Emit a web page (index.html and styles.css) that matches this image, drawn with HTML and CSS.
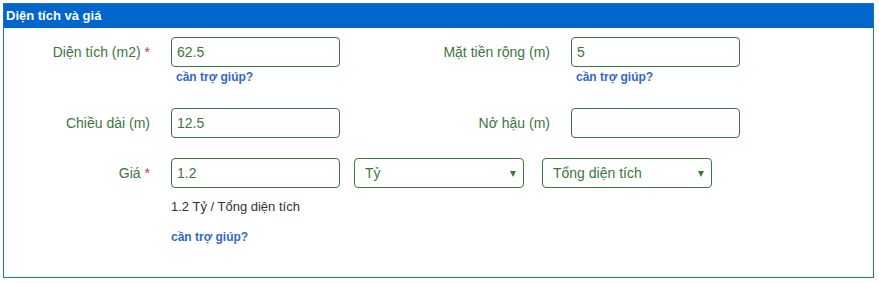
FILE: index.html
```html
<!DOCTYPE html>
<html lang="vi">
<head>
<meta charset="utf-8">
<title>Diện tích và giá</title>
<link rel="stylesheet" href="styles.css">
</head>
<body>
<div class="panel">
  <div class="panel-head">Diện tích và giá</div>
  <div class="panel-body">
    <div class="row row-first">
      <div class="field">
        <label class="label">Diện tích (m2) <span class="req">*</span></label>
        <div class="control">
          <input class="input" type="text" value="62.5">
          <a class="help help-indent">cần trợ giúp?</a>
        </div>
      </div>
      <div class="field">
        <label class="label">Mặt tiền rộng (m)</label>
        <div class="control">
          <input class="input" type="text" value="5">
          <a class="help help-indent">cần trợ giúp?</a>
        </div>
      </div>
    </div>
    <div class="row row-second">
      <div class="field">
        <label class="label">Chiều dài (m)</label>
        <div class="control">
          <input class="input" type="text" value="12.5">
        </div>
      </div>
      <div class="field">
        <label class="label">Nở hậu (m)</label>
        <div class="control">
          <input class="input" type="text" value="">
        </div>
      </div>
    </div>
    <div class="row row-third">
      <div class="field field-wide">
        <label class="label">Giá <span class="req">*</span></label>
        <div class="control">
          <div class="price-line">
            <input class="input" type="text" value="1.2">
            <div class="select-wrap select-unit">
              <select class="select"><option>Tỷ</option></select>
            </div>
            <div class="select-wrap select-area">
              <select class="select"><option>Tổng diện tích</option></select>
            </div>
          </div>
          <div class="summary">1.2 Tỷ / Tổng diện tích</div>
          <a class="help help-last">cần trợ giúp?</a>
        </div>
      </div>
    </div>
  </div>
</div>
</body>
</html>
```

FILE: styles.css
```css
* {
  box-sizing: border-box;
}

body {
  margin: 0;
  background: #ffffff;
  font-family: "Liberation Sans", Arial, Helvetica, sans-serif;
}

.panel {
  margin: 3px 0 0 3px;
  width: 871px;
  border: 1px solid #1a6fd0;
}

.panel-head {
  height: 24px;
  line-height: 24px;
  background: #0066cc;
  color: #ffffff;
  font-weight: bold;
  font-size: 13px;
  padding-left: 2px;
}

.panel-body {
  padding: 9px 0 31px 0;
}

.row {
  display: flex;
}

.row-second {
  margin-top: 22px;
}

.row-third {
  margin-top: 20px;
}

.field {
  width: 400px;
  display: flex;
  align-items: flex-start;
}

.field-wide {
  width: auto;
}

.label {
  width: 146px;
  margin-right: 21px;
  text-align: right;
  font-size: 14px;
  line-height: 30px;
  height: 30px;
  color: #3c763d;
  white-space: nowrap;
}

.req {
  color: #a94442;
}

.control {
  display: flex;
  flex-direction: column;
  align-items: flex-start;
}

.input {
  width: 169px;
  height: 30px;
  margin: 0;
  border: 1px solid #3c763d;
  border-radius: 4px;
  padding: 0 5px;
  font-family: "Liberation Sans", Arial, sans-serif;
  font-size: 14px;
  color: #3c763d;
  background: #ffffff;
  outline: none;
}

.help {
  display: block;
  font-size: 12px;
  font-weight: bold;
  line-height: 18px;
  color: #3366cc;
  cursor: pointer;
}

.help-indent {
  margin-top: 1px;
  padding-left: 5px;
}

.help-last {
  margin-top: 12px;
}

.price-line {
  display: flex;
}

.select-wrap {
  position: relative;
  width: 170px;
  height: 30px;
}

.select-unit {
  margin-left: 14px;
}

.select-area {
  margin-left: 18px;
}

.select-wrap::after {
  content: "";
  position: absolute;
  right: 8px;
  top: 13px;
  width: 0;
  height: 0;
  border-left: 3px solid transparent;
  border-right: 3px solid transparent;
  border-top: 6px solid #3c763d;
  pointer-events: none;
}

.select {
  -webkit-appearance: none;
  appearance: none;
  width: 100%;
  height: 30px;
  margin: 0;
  border: 1px solid #3c763d;
  border-radius: 4px;
  padding: 0 20px 0 10px;
  font-family: "Liberation Sans", Arial, sans-serif;
  font-size: 14px;
  color: #3c763d;
  background: #ffffff;
  outline: none;
}

.summary {
  margin-top: 10px;
  font-size: 13px;
  line-height: 18px;
  color: #333333;
}
```
